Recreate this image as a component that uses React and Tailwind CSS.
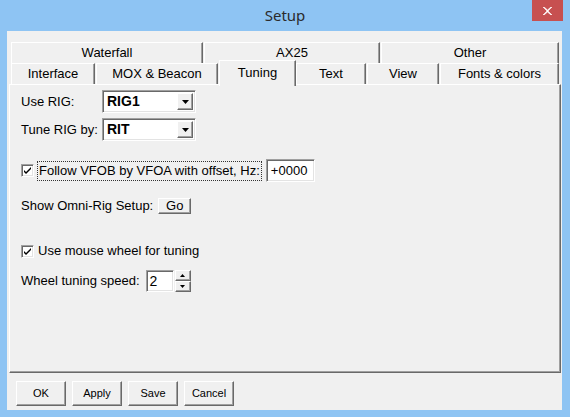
import React from 'react';

const raised =
  'border border-t-white border-l-white border-r-[#696969] border-b-[#696969] shadow-[inset_-1px_-1px_0_#a0a0a0] bg-[#f0f0f0]';
const sunken =
  'border border-t-[#a0a0a0] border-l-[#a0a0a0] border-r-white border-b-white shadow-[inset_1px_1px_0_#696969,inset_-1px_-1px_0_#e3e3e3] bg-white';

const ROW1 = [
  ['Waterfall', 192, 0],
  ['AX25', 176, 1],
  ['Other', 178, 1],
];

const ROW2 = [
  ['Interface', 84, 0],
  ['MOX & Beacon', 122, 1],
  ['Tuning', 77, 1, true],
  ['Text', 70, 0],
  ['View', 72, 1],
  ['Fonts & colors', 119, 1],
];

function Tab({ label, width, gap, active }) {
  if (active) {
    return (
      <div
        className="relative z-10 flex h-[26px] -mb-[2px] items-start justify-center bg-[#f0f0f0] border-t border-l border-r border-t-white border-l-white border-r-[#696969] pt-[2px] shadow-[inset_-1px_0_0_#a0a0a0]"
        style={{ width, marginLeft: gap }}
      >
        {label}
      </div>
    );
  }
  return (
    <div
      className="flex h-[21px] items-center justify-center bg-[#f0f0f0] border-t border-l border-r border-t-white border-l-white border-r-[#696969] shadow-[inset_-1px_0_0_#a0a0a0]"
      style={{ width, marginLeft: gap }}
    >
      {label}
    </div>
  );
}

function Combo({ value }) {
  return (
    <div className={`flex h-[23px] w-[94px] items-stretch ${sunken} p-[2px]`}>
      <div className="flex flex-1 items-center pl-[2px] font-bold text-[14px]">{value}</div>
      <div className={`flex w-[16px] items-center justify-center ${raised}`}>
        <svg width="7" height="4" viewBox="0 0 7 4">
          <path d="M0 0h7L3.5 4z" fill="#000" />
        </svg>
      </div>
    </div>
  );
}

function Check() {
  return (
    <div className={`flex h-[13px] w-[13px] items-center justify-center ${sunken}`}>
      <svg width="9" height="9" viewBox="0 0 9 9">
        <path d="M1 4l2 2 5-5v2L3 8 1 6z" fill="#000" />
      </svg>
    </div>
  );
}

function Spinner() {
  return (
    <div className="ml-[1px] flex h-[22px] w-[16px] flex-col">
      <div className={`flex flex-1 items-center justify-center ${raised}`}>
        <svg width="5" height="3" viewBox="0 0 5 3">
          <path d="M0 3h5L2.5 0z" fill="#000" />
        </svg>
      </div>
      <div className={`flex flex-1 items-center justify-center ${raised}`}>
        <svg width="5" height="3" viewBox="0 0 5 3">
          <path d="M0 0h5L2.5 3z" fill="#000" />
        </svg>
      </div>
    </div>
  );
}

function DlgButton({ children }) {
  return (
    <div className={`flex h-[25px] w-[50px] items-center justify-center text-[11px] ${raised}`}>
      {children}
    </div>
  );
}

export default function App() {
  return (
    <div className="flex h-[417px] w-[570px] flex-col overflow-hidden bg-[#8ec4f3] font-['Liberation_Sans',Arial,sans-serif] text-[13px] text-black">
      {/* title bar */}
      <div className="relative flex h-[31px] items-center justify-center">
        <span className="-mt-[1px] font-['Noto_Sans',sans-serif] text-[15px] text-[#2b2b2b]">Setup</span>
        <div className="absolute right-[7px] top-0 flex h-[21px] w-[31px] items-center justify-center bg-[#c75050]">
          <svg width="9" height="8" viewBox="0 0 9 8">
            <path d="M1 0l3.5 3L8 0h1L5 4l4 4H8L4.5 5 1 8H0l4-4L0 0z" fill="#fff" stroke="#fff" strokeWidth="0.6" />
          </svg>
        </div>
      </div>

      {/* client area */}
      <div className="ml-[7px] mr-[8px] mb-[7px] flex flex-1 flex-col bg-[#f0f0f0]">
        <div className="mt-[11px] ml-[4px] flex">
          {ROW1.map(([l, w, g]) => (
            <Tab key={l} label={l} width={w} gap={g} />
          ))}
        </div>
        <div className="ml-[4px] flex h-[21px] items-end">
          {ROW2.map(([l, w, g, a]) => (
            <Tab key={l} label={l} width={w} gap={g} active={a} />
          ))}
        </div>

        {/* tab page */}
        <div className="ml-[2px] mr-[1px] flex h-[289px] flex-col border border-t-white border-l-white border-r-[#696969] border-b-[#696969] pl-[11px] pt-[5px] shadow-[inset_-1px_-1px_0_#a0a0a0]">
          <div className="flex h-[23px] items-center">
            <span className="w-[81px]">Use RIG:</span>
            <Combo value="RIG1" />
          </div>
          <div className="mt-[5px] flex h-[23px] items-center">
            <span className="w-[81px]">Tune RIG by:</span>
            <Combo value="RIT" />
          </div>

          <div className="mt-[18px] flex h-[23px] items-center">
            <Check />
            <span className="ml-[3px] border border-dotted border-[#333] px-[1px] leading-[18px]">
              Follow VFOB by VFOA with offset, Hz:
            </span>
            <div className={`ml-[4px] flex h-[23px] w-[49px] items-center pl-[4px] ${sunken}`}>+0000</div>
          </div>

          <div className="mt-[16px] flex h-[16px] items-center">
            <span>Show Omni-Rig Setup:</span>
            <div className={`ml-[5px] flex h-[16px] w-[33px] items-center justify-center ${raised}`}>Go</div>
          </div>

          <div className="mt-[28px] flex h-[18px] items-center">
            <Check />
            <span className="ml-[4px]">Use mouse wheel for tuning</span>
          </div>

          <div className="mt-[10px] flex h-[22px] items-center">
            <span>Wheel tuning speed:</span>
            <div className={`ml-[6px] flex h-[22px] w-[28px] items-center pl-[3px] text-[14px] ${sunken}`}>2</div>
            <Spinner />
          </div>
        </div>

        {/* dialog buttons */}
        <div className="mt-[8px] ml-[9px] flex gap-[6px]">
          <DlgButton>OK</DlgButton>
          <DlgButton>Apply</DlgButton>
          <DlgButton>Save</DlgButton>
          <DlgButton>Cancel</DlgButton>
        </div>
      </div>
    </div>
  );
}
